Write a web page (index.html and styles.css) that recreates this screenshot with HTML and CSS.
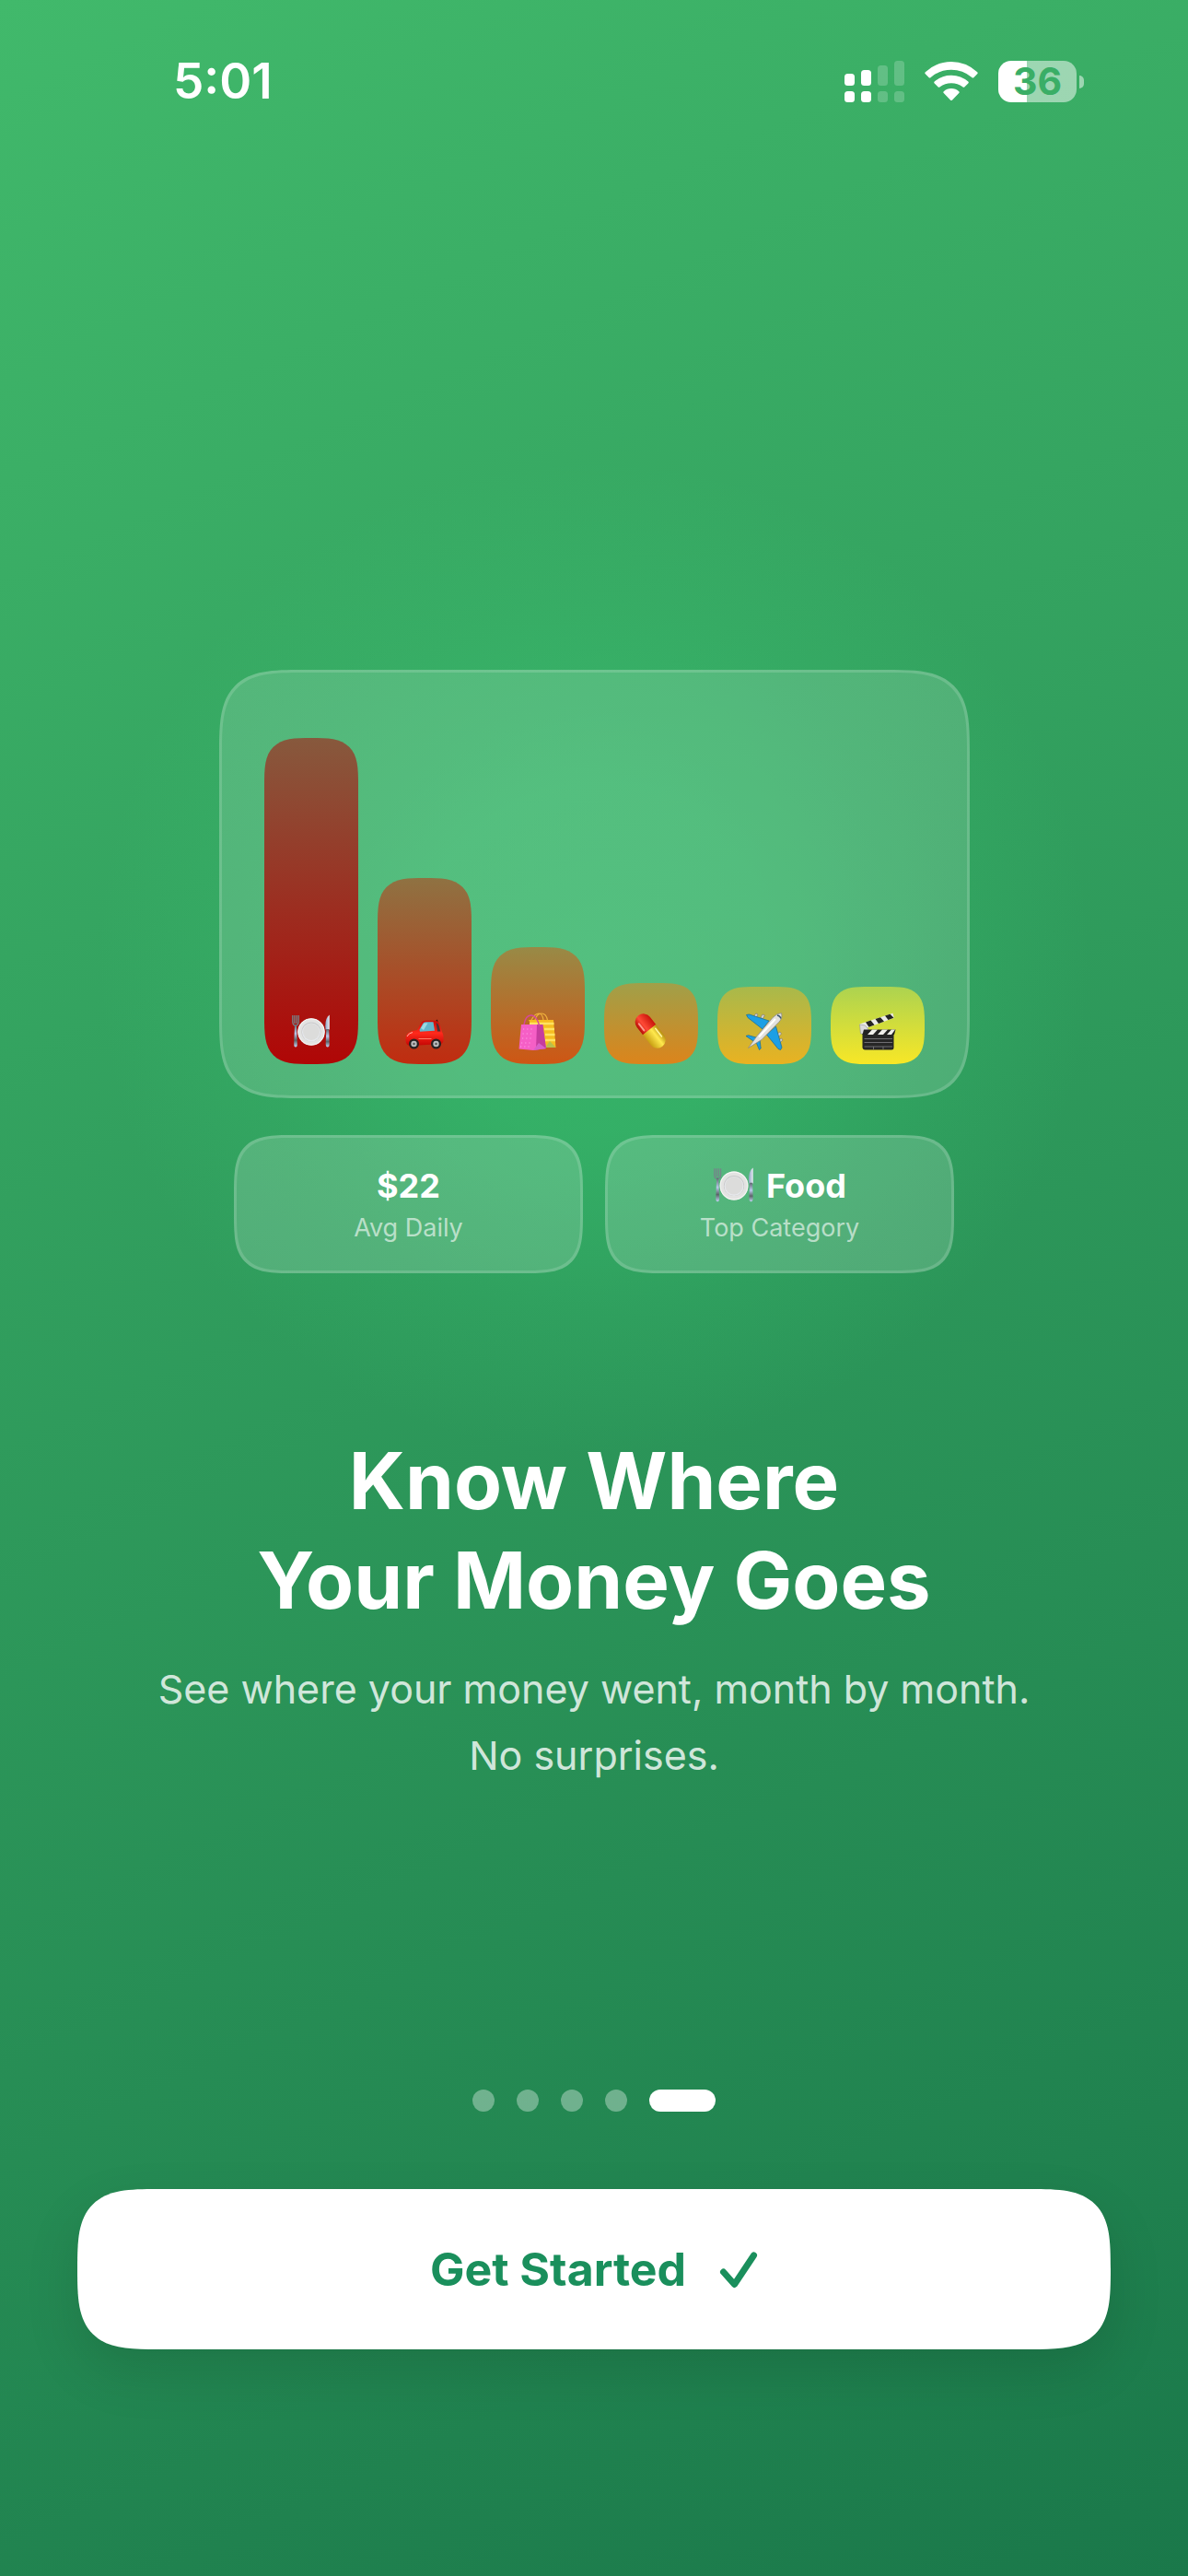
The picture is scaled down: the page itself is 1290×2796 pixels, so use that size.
FILE: index.html
```html
<!DOCTYPE html>
<html lang="en">
<head>
  <meta charset="UTF-8" />
  <meta name="viewport" content="width=device-width, initial-scale=1.0"/>
  <title>Know Where Your Money Goes</title>
  <link rel="stylesheet" href="styles.css">
</head>
<body>
  <!-- shared emoji artwork -->
  <svg class="defs" aria-hidden="true">
    <defs>
      <linearGradient id="pillRed" x1="0" y1="0" x2="1" y2="0">
        <stop offset="0" stop-color="#b80d06"/><stop offset=".4" stop-color="#ff4a36"/><stop offset="1" stop-color="#c9140a"/>
      </linearGradient>
      <linearGradient id="pillYellow" x1="0" y1="0" x2="1" y2="0">
        <stop offset="0" stop-color="#c99f12"/><stop offset=".6" stop-color="#ffe94e"/><stop offset="1" stop-color="#b8900e"/>
      </linearGradient>
      <linearGradient id="carRed" x1="0" y1="0" x2="0" y2="1">
        <stop offset="0" stop-color="#c90c08"/><stop offset=".5" stop-color="#ff2a1c"/><stop offset="1" stop-color="#c40603"/>
      </linearGradient>
      <linearGradient id="metal" x1="0" y1="0" x2="0" y2="1">
        <stop offset="0" stop-color="#5f6a70"/><stop offset=".4" stop-color="#b9c8ea"/><stop offset=".7" stop-color="#5b6468"/><stop offset="1" stop-color="#c3d4f4"/>
      </linearGradient>
      <linearGradient id="blade" x1="0" y1="0" x2="1" y2="0">
        <stop offset="0" stop-color="#8fa4c4"/><stop offset="1" stop-color="#e6eaf2"/>
      </linearGradient>
      <symbol id="plate" viewBox="0 0 42 42">
        <path d="M.8 3v7.200Q1 14 4 14T7.200 10V3M2.900 3v9M5.100 3v9" fill="none" stroke="#75858a" stroke-width="1.300"/>
        <path d="M3 13h2l.8 21q.2 3.500-1.800 3.500T2.200 34z" fill="url(#metal)"/>
        <path d="M40.800 2.500q-4.500 3-4.500 12l.2 4h4.300z" fill="url(#blade)"/>
        <path d="M37.300 18h2.900l.5 16q0 3.500-2 3.500t-2-3.500z" fill="url(#metal)"/>
        <circle cx="21" cy="21" r="14.700" fill="#e3e3e2"/>
        <circle cx="21" cy="21" r="14.200" fill="none" stroke="#f6f6f5" stroke-width="1"/>
        <circle cx="21" cy="21" r="10.600" fill="#c9c9ca"/>
        <circle cx="21" cy="21.500" r="10" fill="#e6e8ec"/>
        <circle cx="21" cy="21" r="9" fill="#dcdcdb"/>
      </symbol>
    </defs>
  </svg>

  <div class="screen">
    <header class="status-bar">
      <time class="clock">5:01</time>
      <div class="indicators">
        <svg class="signal" viewBox="0 0 65 45" fill="#fff" aria-label="Signal">
          <rect x="0" y="14" width="11" height="13" rx="3.500"/>
          <rect x="18" y="10" width="11" height="17" rx="3.500"/>
          <g opacity=".2">
            <rect x="36" y="5" width="11" height="22" rx="3.500"/>
            <rect x="54" y="0" width="11" height="27" rx="3.500"/>
            <rect x="36" y="33" width="11" height="12" rx="3.500"/>
            <rect x="54" y="33" width="11" height="12" rx="3.500"/>
          </g>
          <rect x="0" y="33" width="11" height="12" rx="3.500"/>
          <rect x="18" y="33" width="11" height="12" rx="3.500"/>
        </svg>
        <svg class="wifi" viewBox="0 0 58 45" fill="#fff" aria-label="Wi-Fi">
          <path d="M.8 12.200Q13 1 29 1t28.200 11.200q1 1 0 2l-3.700 3.700q-1 1-2.200 0Q41.500 9.700 29 9.700T6.700 17.900q-1.200 1-2.200 0L.8 14.200q-1-1 0-2z"/>
          <path d="M10.700 22.600Q18.500 15.700 29 15.700t18.300 6.900q1 1 0 2l-3.800 3.700q-1 1-2.200 0Q36 24.300 29 24.300t-12.300 4q-1.200 1-2.200 0l-3.800-3.700q-1-1 0-2z"/>
          <path d="M20.700 33.200Q24.300 30 29 30t8.300 3.200q1 .9 0 1.900l-7.200 7.300q-1.100 1-2.200 0l-7.200-7.300q-1-1 0-1.900z"/>
        </svg>
        <div class="battery">
          <span class="battery-level">36</span>
        </div>
      </div>
    </header>

    <main class="content">
      <section class="chart" aria-label="Spending by category">
        <div class="bar bar-food" style="height: 354px">
          <svg class="emoji" role="img" aria-label="Food"><use href="#plate"/></svg>
        </div>
        <div class="bar bar-car" style="height: 202px">
          <svg class="emoji" viewBox="0 0 42 42" role="img" aria-label="Transport">
            <path d="M33 9l2-1.500.5 3z" fill="#301010"/>
            <path d="M.6 31q-.8-6.500 3.200-9 3.500-2.300 9.200-3L17 11.500Q18.500 8.800 22 8.800h10q4.200.2 5.500 4.200L40 21q1.800 2.500 1.600 8.500 0 4-3.600 4.800L5 36q-4-.5-4.400-5z" fill="url(#carRed)"/>
            <path d="M15.500 18.800l3.700-6.800q1-1.700 3-1.700h8.300l1.500 9.500-16 1z" fill="#62b5cb"/>
            <path d="M17 17l3.500-5.500h4L20 19z" fill="#9bd9e2"/>
            <path d="M33.500 11q2.300.5 3.200 3.500l1.600 6H35z" fill="#4d3034"/>
            <path d="M2 26q2-4 6-4.500" fill="none" stroke="#ffb0a6" stroke-width="1"/>
            <path d="M14.500 28.500h14" stroke="#ff7d68" stroke-width="1"/>
            <circle cx="9.500" cy="34" r="5.500" fill="#262222"/><circle cx="9.500" cy="34" r="3.200" fill="#b9bcbd"/><circle cx="9.500" cy="34" r="1.200" fill="#555"/>
            <circle cx="33.500" cy="34" r="5.500" fill="#262222"/><circle cx="33.500" cy="34" r="3.200" fill="#b9bcbd"/><circle cx="33.500" cy="34" r="1.200" fill="#555"/>
          </svg>
        </div>
        <div class="bar bar-shopping" style="height: 127px">
          <svg class="emoji" viewBox="0 0 42 42" role="img" aria-label="Shopping">
            <path d="M18 8Q20 1 25 1t6.500 7M14 8Q18 1 22 1t5 7" fill="none" stroke="#efb13c" stroke-width="1.200"/>
            <path d="M11 8h27l2.500 30H26z" fill="#f6bd21"/>
            <path d="M12 12h26.500M28 18h11M29 24h10.500M29 30h11" stroke="#ffe261" stroke-width="2.500"/>
            <path d="M29 38l5-7 6.500 7z" fill="#b9bf4c"/>
            <path d="M3 13h23l4 26-14 2L.5 39.500z" fill="#f55fc6"/>
            <path d="M20 13h6.500l3.500 26-11 1.500z" fill="#c53c9f"/>
            <path d="M16 41l6-8 8 6z" fill="#d85fc9"/>
            <path d="M6 13Q7.500 3.500 13.500 3T23 15" fill="none" stroke="#d6489c" stroke-width="1.500"/>
            <path d="M5 18h12M4.500 23h12M4 28h12M3 33h12M2 37h12" stroke="#ffa0e4" stroke-width="1.200" stroke-dasharray="1.200 3"/>
          </svg>
        </div>
        <div class="bar bar-health" style="height: 88px">
          <svg class="emoji" viewBox="0 0 42 42" role="img" aria-label="Health">
            <g transform="rotate(-38 21 21)">
              <path d="M12 20V9.500a9 9 0 0 1 18 0V20z" fill="url(#pillRed)" transform="translate(0 -2)"/>
              <path d="M12 18v14a9 9 0 0 0 18 0V18z" fill="url(#pillYellow)"/>
              <path d="M16 6v9" stroke="#ff9a8d" stroke-width="2" stroke-linecap="round"/>
              <path d="M27 21v11" stroke="#fff6a0" stroke-width="1.500" stroke-linecap="round"/>
            </g>
          </svg>
        </div>
        <div class="bar bar-travel" style="height: 84px">
          <svg class="emoji" viewBox="0 0 42 42" role="img" aria-label="Travel">
            <path d="M10 3l2-2 2 1-2 4zM17 5l2-3 2.500 1-2.500 4zM35 23l3-2 1.500 2-3.500 4zM36.500 30l3-2 1.500 2-3.500 3z" fill="#d3d1cd" stroke="#77736d" stroke-width=".6"/>
            <path d="M1.500 2.500l3-.5L26 9l-7 9L3 5.500zM33.500 15l6.500 23-1.500 2.500-2.500-1L23.500 24z" fill="#1c9fe5" stroke="#14699b" stroke-width=".7"/>
            <path d="M1 25.500l2.500-.8 11 3-4 4.300zM16 29.500l1.200 9.500-1.700 1.500-4-9.500z" fill="#1c9fe5" stroke="#14699b" stroke-width=".7"/>
            <path d="M3.500 38.500L13 25.500 30 5.500q5-5 9.500-4.800 1.700 5.300-3 10L18 29.500z" fill="#e2e1df" stroke="#8c8986" stroke-width=".8"/>
            <path d="M15 26.500L33 7" stroke="#fff" stroke-width="2"/>
            <path d="M35 3q3 .5 4 3.500" fill="none" stroke="#34536a" stroke-width="1.300"/>
          </svg>
        </div>
        <div class="bar bar-movies" style="height: 84px">
          <svg class="emoji" viewBox="0 0 42 42" role="img" aria-label="Entertainment">
            <path d="M1.500 12.500L37.500.8l1.300 5L4.500 18.500z" fill="#ecebe8"/>
            <path d="M8 10.400l5.500-1.800 4 5-6 2.200zM18.500 7l5.500-1.800 4 4.500-6 2.200zM29 3.600L34.500 1.800l4 4-6 2.100z" fill="#252422"/>
            <path d="M1.500 13l6 1 4 5-3 4.500-6-.5z" fill="#dcdbdd" stroke="#969598" stroke-width=".6"/>
            <path d="M4.500 23h34v15q0 2.500-2.500 2.500H7.500q-3 0-3-3z" fill="#262626"/>
            <path d="M6 18.500h34.500l-1.500 5.500H4.500z" fill="#222"/>
            <path d="M15 18.500h6L16 24h-6zM26 18.500h6L27 24h-6zM36 18.500h4l-4 5.500h-5z" fill="#f0efeb"/>
            <path d="M6.500 28.500H37M6.500 32.500H37M6.500 37H37M16.500 37v3M27 37v3" stroke="#77767a" stroke-width=".9"/>
          </svg>
        </div>
      </section>

      <section class="stats">
        <div class="stat">
          <span class="stat-value">$22</span>
          <span class="stat-label">Avg Daily</span>
        </div>
        <div class="stat">
          <span class="stat-value">
            <svg class="stat-emoji" aria-hidden="true"><use href="#plate"/></svg>
            Food
          </span>
          <span class="stat-label">Top Category</span>
        </div>
      </section>

      <h1 class="title">Know Where<br>Your Money Goes</h1>
      <p class="subtitle">See where your money went, month by month.<br>No surprises.</p>
    </main>

    <footer class="footer">
      <div class="pager" aria-label="Page 5 of 5">
        <span class="dot"></span>
        <span class="dot"></span>
        <span class="dot"></span>
        <span class="dot"></span>
        <span class="dot dot-active"></span>
      </div>
      <button type="button" class="cta">
        Get Started
        <svg class="check" viewBox="0 0 42 42" aria-hidden="true">
          <path d="M4.500 24L16.500 37.500 37.500 6" fill="none" stroke="currentColor" stroke-width="7" stroke-linecap="round" stroke-linejoin="round"/>
        </svg>
      </button>
    </footer>
  </div>
</body>
</html>
```
FILE: styles.css
```css
* {
  box-sizing: border-box;
}
body {
  margin: 0;
  font-family: Inter, "Liberation Sans", sans-serif;
  color: #fff;
}
.defs {
  position: absolute;
  width: 0;
  height: 0;
}
.screen {
  display: flex;
  flex-direction: column;
  min-height: 100vh;
  background:
    radial-gradient(circle 540px at 50% 1040px, rgba(60, 205, 118, 0.46) 0%, rgba(60, 205, 118, 0.4) 35%, rgba(60, 205, 118, 0.14) 72%, rgba(60, 205, 118, 0) 100%),
    linear-gradient(155deg, #41b96b, #1a784a);
}

/* status bar */
.status-bar {
  display: flex;
  justify-content: space-between;
  align-items: center;
  padding: 56px 121px 0 188px;
}
.clock {
  font-size: 53px;
  font-weight: 600;
  line-height: 64px;
}
.indicators {
  display: flex;
  align-items: center;
  gap: 22px;
}
.signal {
  width: 65px;
  height: 45px;
}
.wifi {
  width: 58px;
  height: 45px;
}
.battery {
  position: relative;
  width: 85px;
  height: 45px;
  border-radius: 14px;
  background: linear-gradient(to right, #fff 31px, rgba(255, 255, 255, 0.5) 31px);
}
.battery::after {
  content: "";
  position: absolute;
  left: 88px;
  top: 16px;
  width: 5px;
  height: 14px;
  border-radius: 0 6px 6px 0;
  background: rgba(255, 255, 255, 0.5);
}
.battery-level {
  display: block;
  font-size: 41px;
  font-weight: 700;
  line-height: 45px;
  text-align: center;
  color: #3aae66;
}

/* content */
.content {
  flex: 1;
  display: flex;
  flex-direction: column;
  align-items: center;
  justify-content: flex-end;
  padding: 0 84px 327px;
}
.chart {
  display: flex;
  align-items: flex-end;
  gap: 21px;
  height: 465px;
  padding: 0 46px 34px;
  border: 3px solid rgba(255, 255, 255, 0.15);
  border-radius: 60px;
  background: rgba(255, 255, 255, 0.15);
}
.bar {
  display: flex;
  align-items: flex-end;
  justify-content: center;
  width: 102px;
  padding-bottom: 14px;
  border-radius: 36px;
}
.bar-food { background: linear-gradient(#87593d, #b00606); }
.bar-car { background: linear-gradient(#8f7242, #c02c10); }
.bar-shopping { background: linear-gradient(#988a46, #ce5614); }
.bar-health { background: linear-gradient(#a0a049, #dc841b); }
.bar-travel { background: linear-gradient(#a8b94b, #e9b221); }
.bar-movies { background: linear-gradient(#acd350, #f8e726); }
.emoji {
  width: 42px;
  height: 42px;
}

.stats {
  display: flex;
  gap: 24px;
  margin-top: 40px;
}
.stat {
  display: flex;
  flex-direction: column;
  align-items: center;
  gap: 8px;
  width: 379px;
  padding: 30px 0;
  border: 3px solid rgba(255, 255, 255, 0.15);
  border-radius: 42px;
  background: rgba(255, 255, 255, 0.17);
}
.stat-value {
  display: flex;
  align-items: center;
  gap: 12px;
  font-size: 36px;
  font-weight: 700;
  line-height: 44px;
}
.stat-emoji {
  width: 46px;
  height: 44px;
}
.stat-label {
  font-size: 27px;
  line-height: 32px;
  color: rgba(255, 255, 255, 0.6);
}

.title {
  margin: 172px 0 27px;
  font-size: 85px;
  font-weight: 700;
  line-height: 108px;
  text-align: center;
}
.subtitle {
  margin: 0;
  font-size: 43px;
  line-height: 72px;
  text-align: center;
  color: rgba(255, 255, 255, 0.8);
}

/* footer */
.footer {
  padding: 0 84px 246px;
}
.pager {
  display: flex;
  justify-content: center;
  gap: 24px;
  margin-bottom: 84px;
}
.dot {
  width: 24px;
  height: 24px;
  border-radius: 12px;
  background: rgba(255, 255, 255, 0.35);
}
.dot-active {
  width: 72px;
  background: #fff;
}
.cta {
  display: flex;
  align-items: center;
  justify-content: center;
  gap: 36px;
  width: 100%;
  height: 174px;
  border: none;
  border-radius: 60px;
  background: #fff;
  box-shadow: 0 24px 60px rgba(0, 0, 0, 0.12);
  color: #1a8f5c;
  font-family: inherit;
  font-size: 50px;
  font-weight: 700;
  cursor: pointer;
}
.check {
  width: 42px;
  height: 42px;
}

/* smoother corners where the browser has them */
@supports (corner-shape: squircle) {
  .chart, .bar, .stat, .cta {
    corner-shape: superellipse(1.7);
  }
  .chart {
    border-radius: 90px;
  }
  .bar {
    border-radius: 51px;
  }
  .stat {
    border-radius: 64px;
  }
  .cta {
    border-radius: 87px;
  }
}
```
